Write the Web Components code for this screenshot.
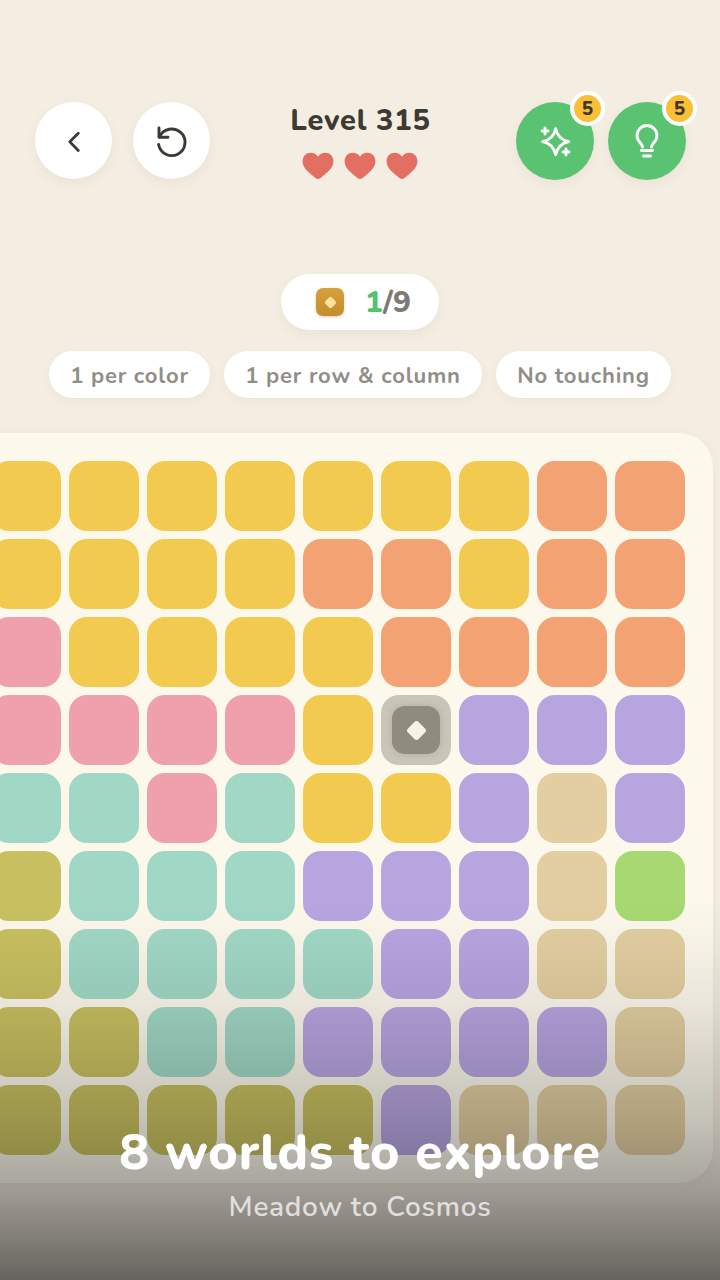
<!DOCTYPE html>
<html>
<head>
<meta charset="utf-8">
<style>
    html, body { margin: 0; padding: 0; background: #f4ede1; }
    body { width: 720px; height: 1280px; overflow: hidden; font-family: "Nunito", "Lato", "Noto Sans", sans-serif; }
</style>
</head>
<body>
<game-screen></game-screen>
<script>
const ICONS = {
    back: `<svg width="32" height="32" viewBox="0 0 32 32" fill="none" stroke="#3d3a34" stroke-width="2.8" stroke-linecap="round" stroke-linejoin="round"><path d="M20.3 8.2 L11.8 16.8 L20.3 25.4"/></svg>`,
    undo: `<svg width="34" height="34" viewBox="0 0 34 34" fill="none" stroke="#3d3a34" stroke-width="2.9" stroke-linecap="round" stroke-linejoin="round"><path d="M4 4 V13.3 H13"/><path d="M4.5 13 A13.3 13.3 0 1 1 3.6 20.5"/></svg>`,
    sparkle: `<svg width="34" height="34" viewBox="0 0 34 34" fill="none" stroke="#fff" stroke-width="2.9" stroke-linecap="round" stroke-linejoin="round"><path d="M17.7 4.7 C19.3 12.2 23.2 16.1 30.7 17.7 C23.2 19.3 19.3 23.2 17.7 30.7 C16.1 23.2 12.2 19.3 4.7 17.7 C12.2 16.1 16.1 12.2 17.7 4.7 Z"/><path d="M7 4 V10 M4 7 H10"/><path d="M28 25 V31 M25 28 H31"/></svg>`,
    bulb: `<svg width="34" height="36" viewBox="0 0 34 36" fill="none" stroke="#fff" stroke-width="2.9" stroke-linecap="round" stroke-linejoin="round"><path d="M12.5 24 C12.3 20.5 7 18.5 7 12.5 A10 10 0 0 1 27 12.5 C27 18.5 21.7 20.5 21.5 24"/><path d="M11.5 27.5 H22.5"/><path d="M13.5 33 H20.5"/></svg>`,
    heart: `<svg width="32" height="28" viewBox="0 0 32 28"><path fill="#e36f62" d="M16 27 C14.6 27 13.2 26 9.5 22.8 C4.2 18.2 .6 14.8 .6 9.3 C.6 4.2 4.3 .8 8.8 .8 C11.8 .8 14.5 2.2 16 4.8 C17.5 2.2 20.2 .8 23.2 .8 C27.7 .8 31.4 4.2 31.4 9.3 C31.4 14.8 27.8 18.2 22.5 22.8 C18.8 26 17.4 27 16 27 Z"/></svg>`
};

class RoundButton extends HTMLElement {
    constructor() {
        super();
        this.attachShadow({ mode: 'open' });
        const green = this.hasAttribute('green');
        const count = this.getAttribute('count');
        this.shadowRoot.innerHTML = `
            <style>
                :host { display: block; position: relative; width: ${green ? 78 : 77}px; height: ${green ? 78 : 77}px; }
                .face {
                    width: 100%; height: 100%; border-radius: 50%;
                    display: flex; align-items: center; justify-content: center;
                    background: ${green ? '#5ac372' : '#ffffff'};
                    box-shadow: 0 4px 12px rgba(90, 75, 50, .06);
                }
                .count {
                    position: absolute; top: -11px; right: -11px;
                    box-sizing: border-box; width: 35px; height: 35px; border-radius: 50%;
                    background: #fbbf36; border: 4px solid #fff;
                    display: flex; align-items: center; justify-content: center;
                    font-size: 19px; font-weight: 800; color: #3d3a34;
                }
            </style>
            <div class="face">${ICONS[this.getAttribute('icon')]}</div>
            ${count ? `<span class="count">${count}</span>` : ''}
        `;
    }
}

class LevelTitle extends HTMLElement {
    constructor() {
        super();
        this.attachShadow({ mode: 'open' });
        this.shadowRoot.innerHTML = `
            <style>
                :host { display: flex; flex-direction: column; align-items: center; padding-top: 1px; }
                .title { font-size: 29px; line-height: 36px; font-weight: 800; color: #3d3a34; letter-spacing: .8px; white-space: nowrap; }
                .hearts { display: flex; gap: 10px; margin: 13px 2px 0 0; }
                .hearts svg { display: block; }
            </style>
            <div class="title"><slot></slot></div>
            <div class="hearts">${ICONS.heart.repeat(3)}</div>
        `;
    }
}

class GameHeader extends HTMLElement {
    constructor() {
        super();
        this.attachShadow({ mode: 'open' });
        this.shadowRoot.innerHTML = `
            <style>
                :host { display: grid; grid-template-columns: 1fr auto 1fr; align-items: start; padding: 102px 34px 0 35px; height: 172px; }
                .left { display: flex; gap: 21px; }
                .right { display: flex; gap: 14px; justify-content: flex-end; }
            </style>
            <div class="left">
                <round-button icon="back"></round-button>
                <round-button icon="undo"></round-button>
            </div>
            <level-title>Level 315</level-title>
            <div class="right">
                <round-button green icon="sparkle" count="5"></round-button>
                <round-button green icon="bulb" count="5"></round-button>
            </div>
        `;
    }
}

class ProgressPill extends HTMLElement {
    constructor() {
        super();
        this.attachShadow({ mode: 'open' });
        this.shadowRoot.innerHTML = `
            <style>
                :host {
                    display: flex; align-items: center; gap: 21px; box-sizing: border-box;
                    width: 158px; height: 56px; padding-left: 35px; background: #fff; border-radius: 28px;
                    box-shadow: 0 4px 12px rgba(90, 75, 50, .06);
                    font-size: 30px; font-weight: 800; color: #7d7a74;
                }
                .gem { width: 28px; height: 28px; border-radius: 7px; background: linear-gradient(#d5a13c, #c48c2c); display: flex; align-items: center; justify-content: center; box-shadow: 0 1px 3px rgba(120, 80, 20, .3); }
                .gem i { width: 9px; height: 9px; border-radius: 2px; background: #fde29b; transform: rotate(45deg); }
                b { color: #55c26f; font-weight: 800; }
            </style>
            <span class="gem"><i></i></span>
            <span><b>1</b>/9</span>
        `;
    }
}

class RuleChip extends HTMLElement {
    constructor() {
        super();
        this.attachShadow({ mode: 'open' });
        this.shadowRoot.innerHTML = `
            <style>
                :host {
                    display: flex; align-items: center; justify-content: center; box-sizing: border-box; height: 47px; padding-top: 2px;
                    background: #fff; border-radius: 24px; box-shadow: 0 3px 10px rgba(90, 75, 50, .05);
                    font-size: 22px; font-weight: 700; color: #918e88; letter-spacing: .8px; white-space: nowrap;
                }
            </style>
            <slot></slot>
        `;
    }
}

const COLORS = { Y: '#f2ca4f', O: '#f3a373', P: '#f0a0ac', L: '#b7a5e0', T: '#a1d8c5', B: '#e2cea0', G: '#a8d872', V: '#c8c060' };
const BOARD = [
    'YYYYYYYOO',
    'YYYYOOYOO',
    'PYYYYOOOO',
    'PPPPYXLLL',
    'TTPTYYLBL',
    'VTTTLLLBG',
    'VTTTTLLBB',
    'VVTTLLLLB',
    'VVVVVLBBB'
];

class GameBoard extends HTMLElement {
    constructor() {
        super();
        this.attachShadow({ mode: 'open' });
        const cells = BOARD.join('').split('').map(c => {
            if (c == 'X') return `<div class="cell queen"><span class="gem"><i></i></span></div>`;
            return `<div class="cell" style="background:${COLORS[c]}"></div>`;
        }).join('');
        this.shadowRoot.innerHTML = `
            <style>
                :host {
                    display: grid; grid-template-columns: repeat(9, 70px); grid-auto-rows: 70px; gap: 8px;
                    box-sizing: border-box; width: 750px; height: 750px; padding: 28px; margin-left: -37px;
                    background: #fcf8ec; border-radius: 34px;
                    box-shadow: 0 2px 12px rgba(90, 75, 50, .05);
                }
                .cell { border-radius: 18px; }
                .queen { background: #cac5b7; display: flex; align-items: center; justify-content: center; }
                .gem { width: 48px; height: 48px; border-radius: 13px; background: #8f8b7d; display: flex; align-items: center; justify-content: center; box-shadow: 0 0 6px rgba(120, 115, 100, .3); }
                .gem i { width: 15px; height: 15px; border-radius: 3px; background: #f6f2e6; transform: rotate(45deg); }
            </style>
            ${cells}
        `;
    }
}

class PromoCaption extends HTMLElement {
    constructor() {
        super();
        this.attachShadow({ mode: 'open' });
        this.shadowRoot.innerHTML = `
            <style>
                :host {
                    position: absolute; left: 0; right: 0; bottom: 0; height: 380px;
                    display: flex; flex-direction: column; align-items: center; justify-content: flex-end;
                    padding-bottom: 55px; box-sizing: border-box;
                    background: linear-gradient(to bottom, rgba(0, 0, 0, 0) 0%, rgba(0, 0, 0, .03) 13%, rgba(0, 0, 0, .08) 28%, rgba(0, 0, 0, .22) 58%, rgba(0, 0, 0, .34) 76%, rgba(0, 0, 0, .58) 100%);
                }
                .head { font-size: 50px; line-height: 58px; font-weight: 800; color: #fff; letter-spacing: .9px; white-space: nowrap; }
                .sub { font-size: 28px; line-height: 36px; font-weight: 600; color: rgba(255, 255, 255, .72); letter-spacing: .7px; margin-top: 7px; white-space: nowrap; }
            </style>
            <div class="head"><slot name="head"></slot></div>
            <div class="sub"><slot name="sub"></slot></div>
        `;
    }
}

class GameScreen extends HTMLElement {
    constructor() {
        super();
        this.attachShadow({ mode: 'open' });
        this.shadowRoot.innerHTML = `
            <style>
                :host { display: block; position: relative; width: 720px; height: 1280px; overflow: hidden; background: #f4ede1; }
                .center { display: flex; justify-content: center; }
                .rules { display: flex; justify-content: center; gap: 14px; margin-top: 21px; }
                rule-chip:nth-child(1) { width: 161px; }
                rule-chip:nth-child(2) { width: 258px; }
                rule-chip:nth-child(3) { width: 175px; }
                game-board { margin-top: 35px; }
            </style>
            <game-header></game-header>
            <div class="center"><progress-pill></progress-pill></div>
            <div class="rules">
                <rule-chip>1 per color</rule-chip>
                <rule-chip>1 per row &amp; column</rule-chip>
                <rule-chip>No touching</rule-chip>
            </div>
            <game-board></game-board>
            <promo-caption>
                <span slot="head">8 worlds to explore</span>
                <span slot="sub">Meadow to Cosmos</span>
            </promo-caption>
        `;
    }
}

customElements.define('round-button', RoundButton);
customElements.define('level-title', LevelTitle);
customElements.define('game-header', GameHeader);
customElements.define('progress-pill', ProgressPill);
customElements.define('rule-chip', RuleChip);
customElements.define('game-board', GameBoard);
customElements.define('promo-caption', PromoCaption);
customElements.define('game-screen', GameScreen);
</script>
</body>
</html>
